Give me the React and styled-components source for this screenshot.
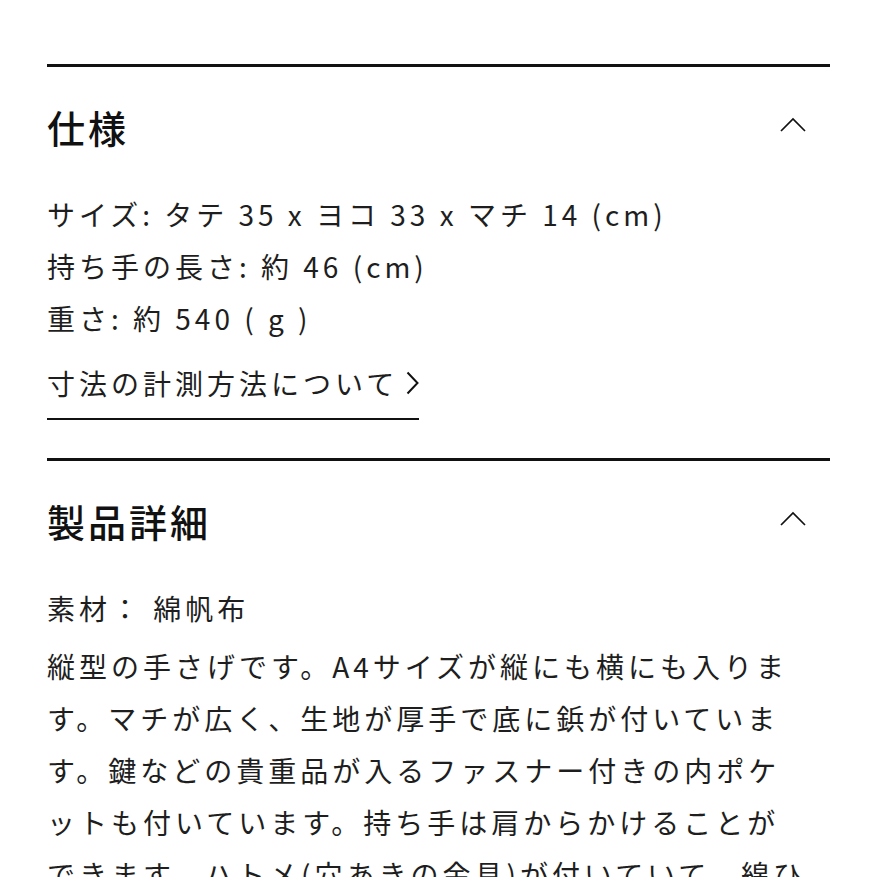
import React from "react";
import styled, { createGlobalStyle } from "styled-components";

const Global = createGlobalStyle`
  html, body { margin: 0; padding: 0; background: #fff; }
  body {
    font-family: "Noto Sans CJK JP", "Noto Sans", sans-serif;
    color: #1a1a1a;
    -webkit-font-smoothing: antialiased;
  }
`;

const Page = styled.div`
  padding: 64px 47px 0;
  height: 877px;
  overflow: hidden;
  box-sizing: border-box;
`;

const Section = styled.section`
  border-top: 3px solid #111;
  padding-bottom: 38px;
`;

const Header = styled.div`
  display: flex;
  align-items: center;
  justify-content: space-between;
  padding: 34px 0 35px;
`;

const Title = styled.h2`
  margin: 0;
  font-size: 38px;
  font-weight: 500;
  line-height: 52px;
  letter-spacing: 3px;
  color: #111;
`;

const Toggle = styled.span`
  display: flex;
  margin-right: 24px;
  margin-top: -6px;
`;

const Body = styled.div`
  font-size: 28px;
  line-height: 52px;
  letter-spacing: 4px;
  color: #1e1e1e;
`;

const Para = styled.p`
  margin: 0 0 ${(p) => p.$gap || 0}px;
  white-space: nowrap;
`;

const Link = styled.a`
  display: inline-flex;
  align-items: center;
  gap: 8px;
  margin-top: 13px;
  padding-bottom: 9px;
  border-bottom: 2px solid #111;
  color: #1e1e1e;
  text-decoration: none;
`;

const Chevron = () => (
  <Toggle>
    <svg width="26" height="15" viewBox="0 0 26 15" fill="none">
      <path d="M1 14 L13 2 L25 14" stroke="#111" strokeWidth="1.7" />
    </svg>
  </Toggle>
);

const RightArrow = () => (
  <svg width="13" height="24" viewBox="0 0 13 24" fill="none">
    <path d="M1.5 1.5 L11.5 12 L1.5 22.5" stroke="#111" strokeWidth="2" />
  </svg>
);

export default function App() {
  return (
    <>
      <Global />
      <Page>
        <Section>
          <Header>
            <Title>仕様</Title>
            <Chevron />
          </Header>
          <Body>
            <Para>サイズ: タテ 35 x ヨコ 33 x マチ 14 (cm)</Para>
            <Para>持ち手の長さ: 約 46 (cm)</Para>
            <Para>重さ: 約 540 ( g )</Para>
            <Link href="#">
              寸法の計測方法について
              <RightArrow />
            </Link>
          </Body>
        </Section>
        <Section>
          <Header>
            <Title>製品詳細</Title>
            <Chevron />
          </Header>
          <Body>
            <Para $gap={6}>素材： 綿帆布</Para>
            <Para>
              縦型の手さげです。A4サイズが縦にも横にも入りま
              <br />
              す。マチが広く、生地が厚手で底に鋲が付いていま
              <br />
              す。鍵などの貴重品が入るファスナー付きの内ポケ
              <br />
              ットも付いています。持ち手は肩からかけることが
              <br />
              できます。ハトメ(穴あきの金具)が付いていて、綿ひ
              <br />
              もを通すこともできます。
            </Para>
          </Body>
        </Section>
      </Page>
    </>
  );
}
